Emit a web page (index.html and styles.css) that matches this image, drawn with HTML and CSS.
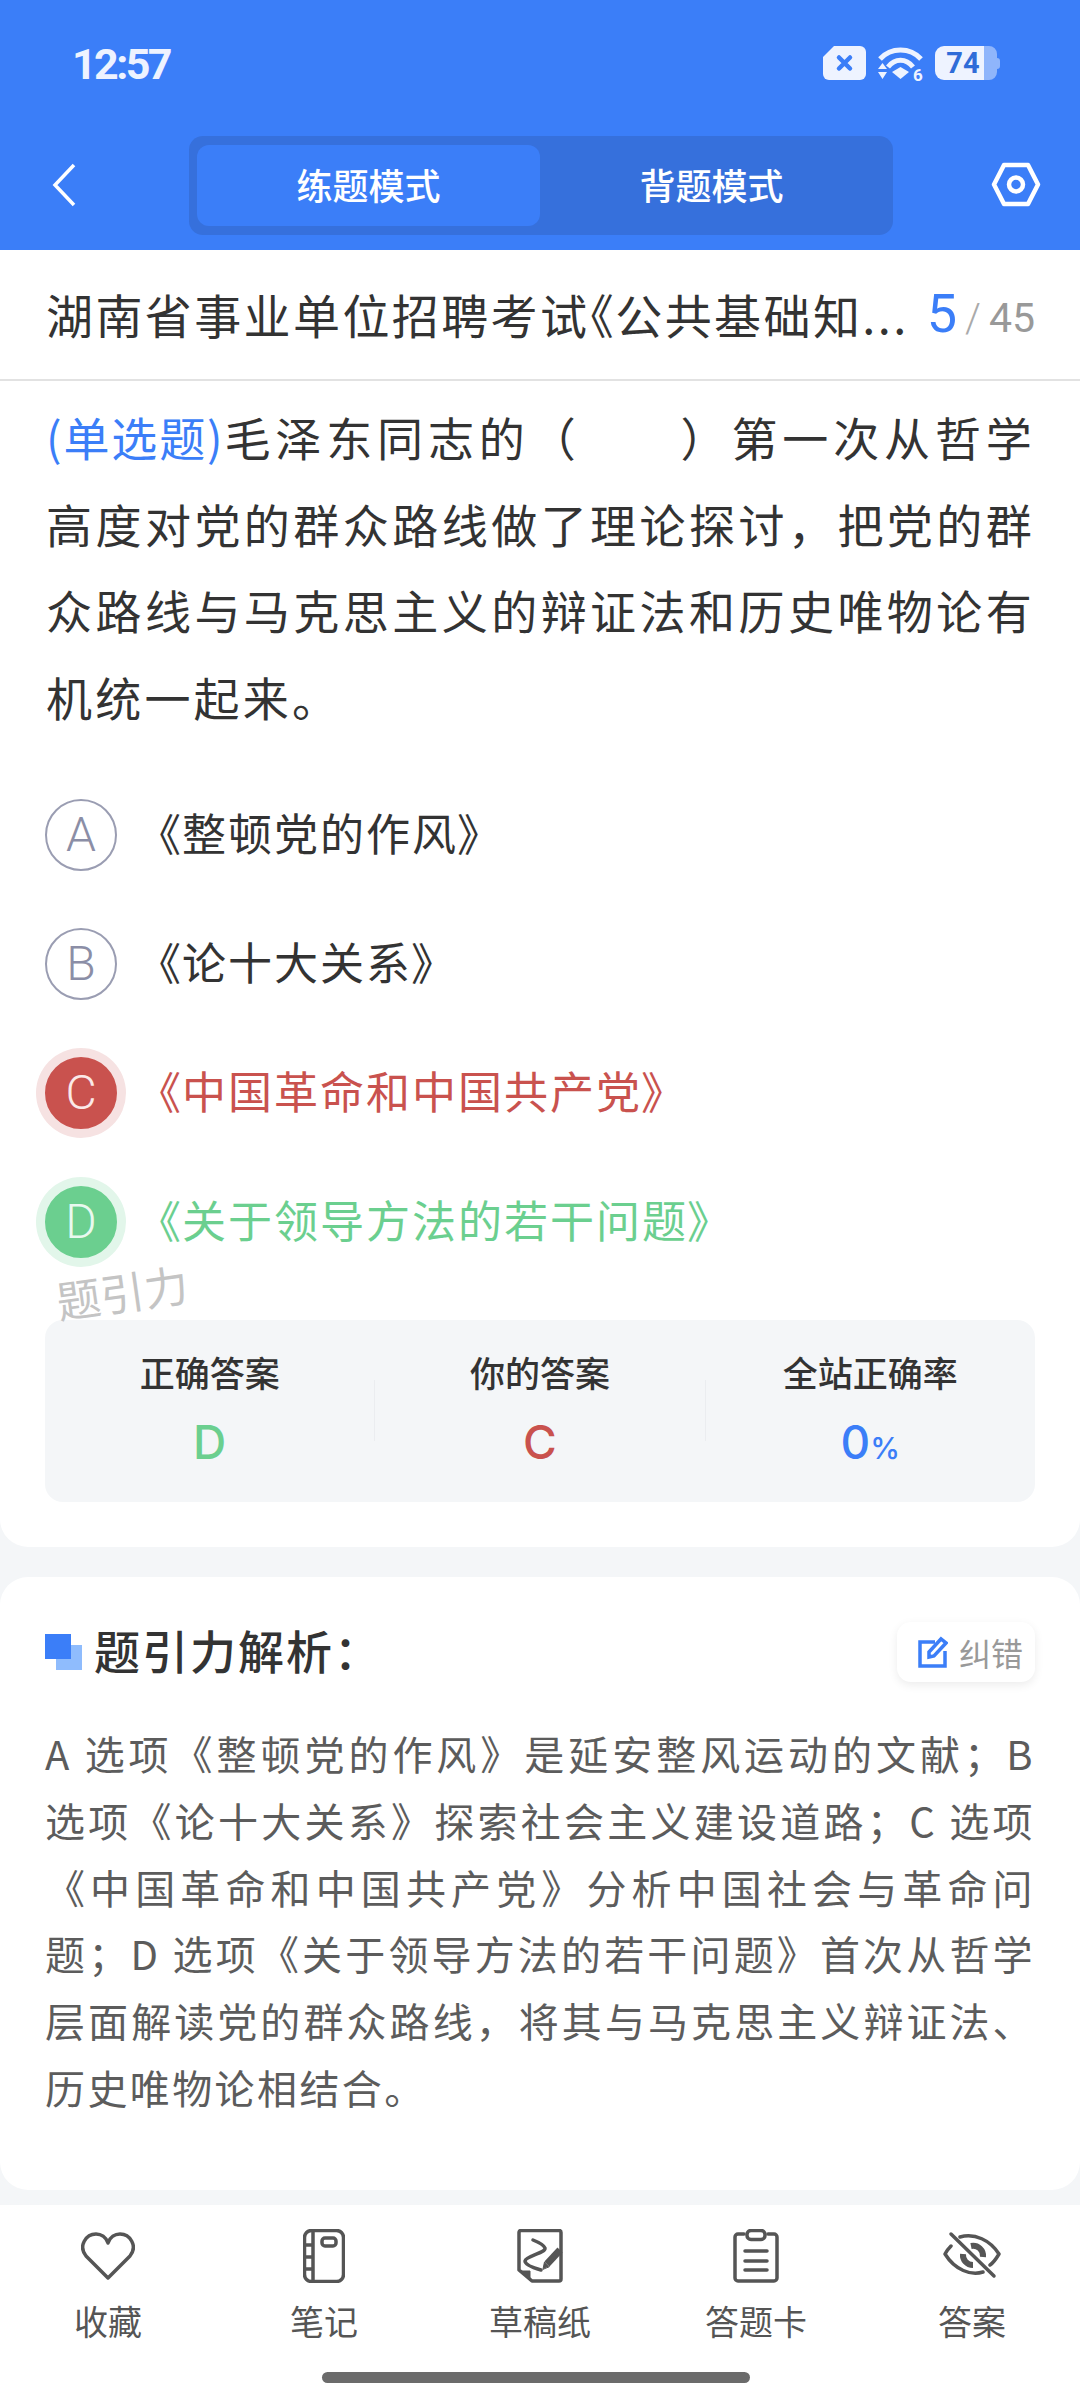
FILE: index.html
```html
<!DOCTYPE html>
<html lang="zh-CN">
<head>
<meta charset="utf-8">
<title>练题模式</title>
<link rel="stylesheet" href="styles.css">
</head>
<body>
<header class="top">
  <div class="status">
    <span class="time">12:57</span>
    <div class="status-icons">
      <svg class="i-sim" viewBox="0 0 43 34"><path class="lite" d="M11 0H37a6 6 0 0 1 6 6V28a6 6 0 0 1-6 6H6a6 6 0 0 1-6-6V11Z"/><path class="x" d="M16 11.500 27 22.500M27 11.500 16 22.500"/></svg>
      <svg class="i-wifi" viewBox="0 0 47 36"><path class="arc" d="M3 13C14 1 33 1 44 13"/><path class="arc" d="M11 21C18 12 29 12 36 21"/><path class="lite" d="M15 26 23.500 21 32 26 23.500 33Z"/><path class="lite" d="M1 23 5.500 17 10 23ZM1 26H10L5.500 33Z"/><text class="six" x="36" y="35">6</text></svg>
      <svg class="i-batt" viewBox="0 0 65 34"><path class="dim" d="M48 0H54a8 8 0 0 1 8 8V12a3 3 0 0 1 3 3V20a3 3 0 0 1-3 3V26a8 8 0 0 1-8 8H48Z"/><path class="lite" d="M9 0H49V34H9a9 9 0 0 1-9-9V9a9 9 0 0 1 9-9Z"/><text class="batt-num" x="28" y="27">74</text></svg>
    </div>
  </div>
  <nav class="navbar">
    <svg class="i-back" viewBox="0 0 24 44"><path d="M22 2 3 22 22 42"/></svg>
    <div class="tabs">
      <div class="tab tab-on">练题模式</div>
      <div class="tab">背题模式</div>
    </div>
    <svg class="i-set" viewBox="0 0 50 45"><path d="M13 3H37L47 22.500 37 42H13L3 22.500Z"/><circle cx="25" cy="22.500" r="7"/></svg>
  </nav>
</header>

<main class="main">
  <section class="card card-q">
    <div class="paper-row">
      <h1 class="paper-title">湖南省事业单位招聘考试《公共基础知...</h1>
      <div class="count"><span class="count-now">5</span><span class="count-sep">/</span><span class="count-all">45</span></div>
    </div>
    <p class="question"><span class="qtype">(单选题)</span>毛泽东同志的（&emsp;&emsp;）第一次从哲学高度对党的群众路线做了理论探讨，把党的群众路线与马克思主义的辩证法和历史唯物论有机统一起来。</p>
    <ul class="options">
      <li class="opt"><span class="dot">A</span><span class="opt-text">《整顿党的作风》</span></li>
      <li class="opt"><span class="dot">B</span><span class="opt-text">《论十大关系》</span></li>
      <li class="opt opt-wrong"><span class="dot">C</span><span class="opt-text">《中国革命和中国共产党》</span></li>
      <li class="opt opt-right"><span class="dot">D</span><span class="opt-text">《关于领导方法的若干问题》</span></li>
    </ul>
    <div class="mark">题引力</div>
    <div class="stats">
      <div class="stat"><div class="stat-label">正确答案</div><div class="stat-val green">D</div></div>
      <i class="sep"></i>
      <div class="stat"><div class="stat-label">你的答案</div><div class="stat-val red">C</div></div>
      <i class="sep"></i>
      <div class="stat"><div class="stat-label">全站正确率</div><div class="stat-val blue">0<small>%</small></div></div>
    </div>
  </section>

  <section class="card card-a">
    <div class="a-head">
      <h2 class="a-title"><span class="squares"><i></i><i></i></span>题引力解析：</h2>
      <div class="fix">
        <svg class="i-fix" viewBox="0 0 30 32"><path d="M17 6H2V30H27V15"/><path d="M11 16 23 3 28 7 16 20 11 21Z"/></svg>
        <span>纠错</span>
      </div>
    </div>
    <p class="analysis">A 选项《整顿党的作风》是延安整风运动的文献；B 选项《论十大关系》探索社会主义建设道路；C 选项《中国革命和中国共产党》分析中国社会与革命问题；D 选项《关于领导方法的若干问题》首次从哲学层面解读党的群众路线，将其与马克思主义辩证法、历史唯物论相结合。</p>
  </section>
</main>

<footer class="bar">
  <div class="tools">
    <div class="tool">
      <span class="tool-ico"><svg width="54" height="48" viewBox="0 0 54 48"><path d="M27 46 5 24C-3 14 5 2 15 2 20 2 25 5 27 11 29 5 34 2 39 2 49 2 57 14 49 24Z"/></svg></span>
      <span class="tool-label">收藏</span>
    </div>
    <div class="tool">
      <span class="tool-ico"><svg width="42" height="54" viewBox="0 0 42 54"><rect x="1.500" y="1.500" width="39" height="51" rx="7"/><path d="M10 2V52M2 16H10M2 28H10M2 40H10"/><rect x="19" y="9" width="14" height="8" rx="3"/></svg></span>
      <span class="tool-label">笔记</span>
    </div>
    <div class="tool">
      <span class="tool-ico"><svg width="46" height="54" viewBox="0 0 46 54"><path d="M4 1.500H42a2 2 0 0 1 2 2V50a2 2 0 0 1-2 2H15L2 41V3.500a2 2 0 0 1 2-2Z"/><path class="fill" d="M3 42H13V51Z"/><path d="M16 11C21 13 27 16 28 19 29 24 9 27 8 32 8 36 17 39 24 41"/><path class="thick" d="M30 35 43 21"/><path class="fill" d="M26 40 27.500 33 32 37.500Z"/></svg></span>
      <span class="tool-label">草稿纸</span>
    </div>
    <div class="tool">
      <span class="tool-ico"><svg width="46" height="54" viewBox="0 0 46 54"><path d="M11 5H5a3 3 0 0 0-3 3V49a3 3 0 0 0 3 3H41a3 3 0 0 0 3-3V8a3 3 0 0 0-3-3H35"/><rect x="14" y="1.500" width="18" height="9" rx="4"/><path d="M12 22H34M12 32H34M12 41H34"/></svg></span>
      <span class="tool-label">答题卡</span>
    </div>
    <div class="tool">
      <span class="tool-ico"><svg width="58" height="50" viewBox="0 0 58 50"><path d="M17 6C32 2 47 9 56 23 53 28 50 32 47 34"/><path d="M8 15C5 18 3 21 2 23 12 39 28 45 40 41"/><path class="thin" d="M28 15a10 10 0 0 1 12 11M30 34a10 10 0 0 1-10-11"/><path d="M8 3 51 45"/></svg></span>
      <span class="tool-label">答案</span>
    </div>
  </div>
  <div class="home"></div>
</footer>
</body>
</html>
```

FILE: styles.css
```css
* { box-sizing: border-box; margin: 0; padding: 0; }

html, body { width: 1080px; height: 2400px; overflow: hidden; }

body {
  display: flex;
  flex-direction: column;
  background: #f4f6f8;
  color: #333;
  font-family: "Noto Sans CJK SC", "Noto Sans", sans-serif;
}

/* header */
.top { height: 250px; background: #3b7ef8; color: #fff; }

.status {
  height: 126px;
  padding: 46px 80px 0 72px;
  display: flex;
  justify-content: space-between;
  align-items: flex-start;
}

.time { font-family: Roboto, sans-serif; font-size: 43px; line-height: 36px; font-weight: 700; letter-spacing: -2.600px; color: #eef3ff; }

.status-icons { display: flex; gap: 11px; align-items: flex-start; }
.i-sim { width: 43px; height: 34px; }
.i-wifi { width: 47px; height: 36px; }
.i-batt { width: 65px; height: 34px; }
.lite { fill: #eef3ff; }
.dim { fill: #8fb5fb; }
.x { stroke: #3b7ef8; stroke-width: 4.500px; stroke-linecap: round; fill: none; }
.arc { stroke: #eef3ff; stroke-width: 5px; fill: none; }
.six { font: 700 17px Roboto, sans-serif; fill: #eef3ff; }
.batt-num { font: 700 29px Roboto, sans-serif; fill: #2f6cd8; text-anchor: middle; }

.navbar { height: 109px; padding-left: 52px; padding-top: 10px; display: flex; align-items: flex-start; }

.i-back { width: 24px; height: 44px; margin-top: 27px; }
.i-back path { fill: none; stroke: #fff; stroke-width: 3.500px; }

.tabs {
  width: 704px;
  height: 99px;
  margin-left: 113px;
  padding: 9px 8px;
  display: flex;
  background: #3670dc;
  border-radius: 14px;
}

.tab { width: 343px; font-size: 36px; font-weight: 500; line-height: 78px; text-align: center; }
.tab-on { background: #3b7ef8; border-radius: 12px; }

.i-set { width: 50px; height: 45px; margin-left: 98px; margin-top: 26px; }
.i-set path, .i-set circle { fill: none; stroke: #fff; stroke-width: 4.500px; stroke-linejoin: round; }

/* cards */
.main { flex: 1; display: flex; flex-direction: column; gap: 30px; min-height: 0; }

.card { background: #fff; }
.card-q { position: relative; height: 1297px; border-radius: 0 0 28px 28px; }
.card-a { flex: 1; padding: 45px 45px 0; border-radius: 28px; }

.paper-row {
  height: 131px;
  padding: 0 45px 2px 46px;
  display: flex;
  align-items: center;
  justify-content: space-between;
  border-bottom: 2px solid #e2e2e2;
}

.paper-title { font-size: 47px; font-weight: 400; color: #333; white-space: nowrap; font-feature-settings: "palt"; letter-spacing: 2.400px; }

.count { display: flex; align-items: baseline; }
.count-now { font-size: 54px; color: #3b7ef8; font-family: Roboto, sans-serif; }
.count-sep { font-size: 40px; color: #aaa; margin: 0 8px; font-family: Roboto, sans-serif; font-weight: 300; }
.count-all { font-size: 41px; color: #999; font-family: Roboto, sans-serif; }

.question {
  margin: 12px 45px 0 46px;
  font-size: 46px;
  line-height: 86.600px;
  letter-spacing: 3.200px;
  text-align: justify;
}
.qtype { color: #3b7ef8; letter-spacing: 0.200px; }

.options { margin-top: 31px; list-style: none; }
.opt { height: 129px; padding-left: 45px; display: flex; align-items: center; }

.dot {
  width: 72px;
  height: 72px;
  flex: none;
  border: 2px solid #9a9db2;
  border-radius: 50%;
  display: flex;
  align-items: center;
  justify-content: center;
  font: 300 48px Roboto, sans-serif;
  color: #8b8ea6;
}

.opt-text { margin-left: 41px; padding-bottom: 6px; font-size: 44px; letter-spacing: 2px; font-feature-settings: "palt"; }

.opt-wrong .opt-text { color: #c9524e; }
.opt-right .opt-text { color: #6bcf8f; }
.opt-wrong .dot { background: #c9524e; border-color: #c9524e; color: #fbe9e8; box-shadow: 0 0 0 9px #f6e2e2; }
.opt-right .dot { background: #6bcf8f; border-color: #6bcf8f; color: #e9f9ef; box-shadow: 0 0 0 9px #e2f6ea; }

.mark {
  position: absolute;
  left: 56px;
  top: 1013px;
  font-size: 44px;
  line-height: 56px;
  color: #c4c4c4;
  transform: rotate(-8deg);
  font-weight: 400;
}

.stats {
  height: 182px;
  margin: 34px 45px 0;
  padding-top: 28px;
  display: flex;
  align-items: flex-start;
  background: #f4f6f8;
  border-radius: 18px;
}

.stat { flex: 1; text-align: center; }
.stat-label { font-size: 35px; line-height: 48px; font-weight: 500; color: #333; }
.stat-val { margin-top: 19px; font: 500 46px/54px Inter, sans-serif; }
.stat-val small { font-size: 30px; }
.green { color: #6bcf8f; }
.red { color: #c9524e; }
.blue { color: #3b7ef8; }

.sep { width: 1px; height: 61px; margin-top: 32px; background: #ebedf0; }

/* analysis */
.a-head { height: 60px; display: flex; justify-content: space-between; align-items: center; }

.a-title { display: flex; align-items: center; padding-bottom: 6px; font-size: 46px; font-weight: 500; letter-spacing: 2px; font-feature-settings: "palt"; }

.squares { position: relative; width: 37px; height: 36px; margin: 6px 12px 0 0; }
.squares i { position: absolute; width: 26px; height: 25px; }
.squares i:first-child { left: 11px; top: 11px; background: #8fbcfd; }
.squares i:last-child { left: 0; top: 0; background: #3b7ef8; }

.fix {
  width: 138px;
  height: 60px;
  padding-left: 21px;
  display: flex;
  align-items: center;
  gap: 11px;
  background: #fff;
  border-radius: 14px;
  box-shadow: 0 3px 10px rgba(0, 0, 0, .08);
  font-size: 32px;
  color: #999;
}

.i-fix { width: 30px; height: 32px; flex: none; }
.i-fix path { fill: none; stroke: #3b7ef8; stroke-width: 3.500px; }

.analysis {
  margin-top: 38px;
  font-size: 40px;
  line-height: 66.800px;
  letter-spacing: 2.400px;
  color: #5c5c5c;
  text-align: justify;
}

/* bottom bar */
.bar { height: 195px; margin-top: 15px; background: #fff; display: flex; flex-direction: column; }

.tools { display: flex; padding-top: 24px; }
.tool { width: 216px; display: flex; flex-direction: column; align-items: center; }
.tool-ico { height: 54px; display: flex; align-items: center; }
.tool-ico svg path, .tool-ico svg rect { fill: none; stroke: #555; stroke-width: 3.500px; stroke-linejoin: round; stroke-linecap: round; }
.tool-ico svg .fill { fill: #555; stroke-width: 1px; }
.tool-ico svg .thick { stroke-width: 7px; stroke-linecap: butt; }
.tool-ico svg .thin { stroke-width: 6px; stroke-linecap: butt; }
.tool-label { margin-top: 14px; font-size: 34px; line-height: 48px; color: #555; }

.home { width: 428px; height: 11px; margin: 27px 0 0 322px; background: #6b6b6b; border-radius: 6px; }
```
